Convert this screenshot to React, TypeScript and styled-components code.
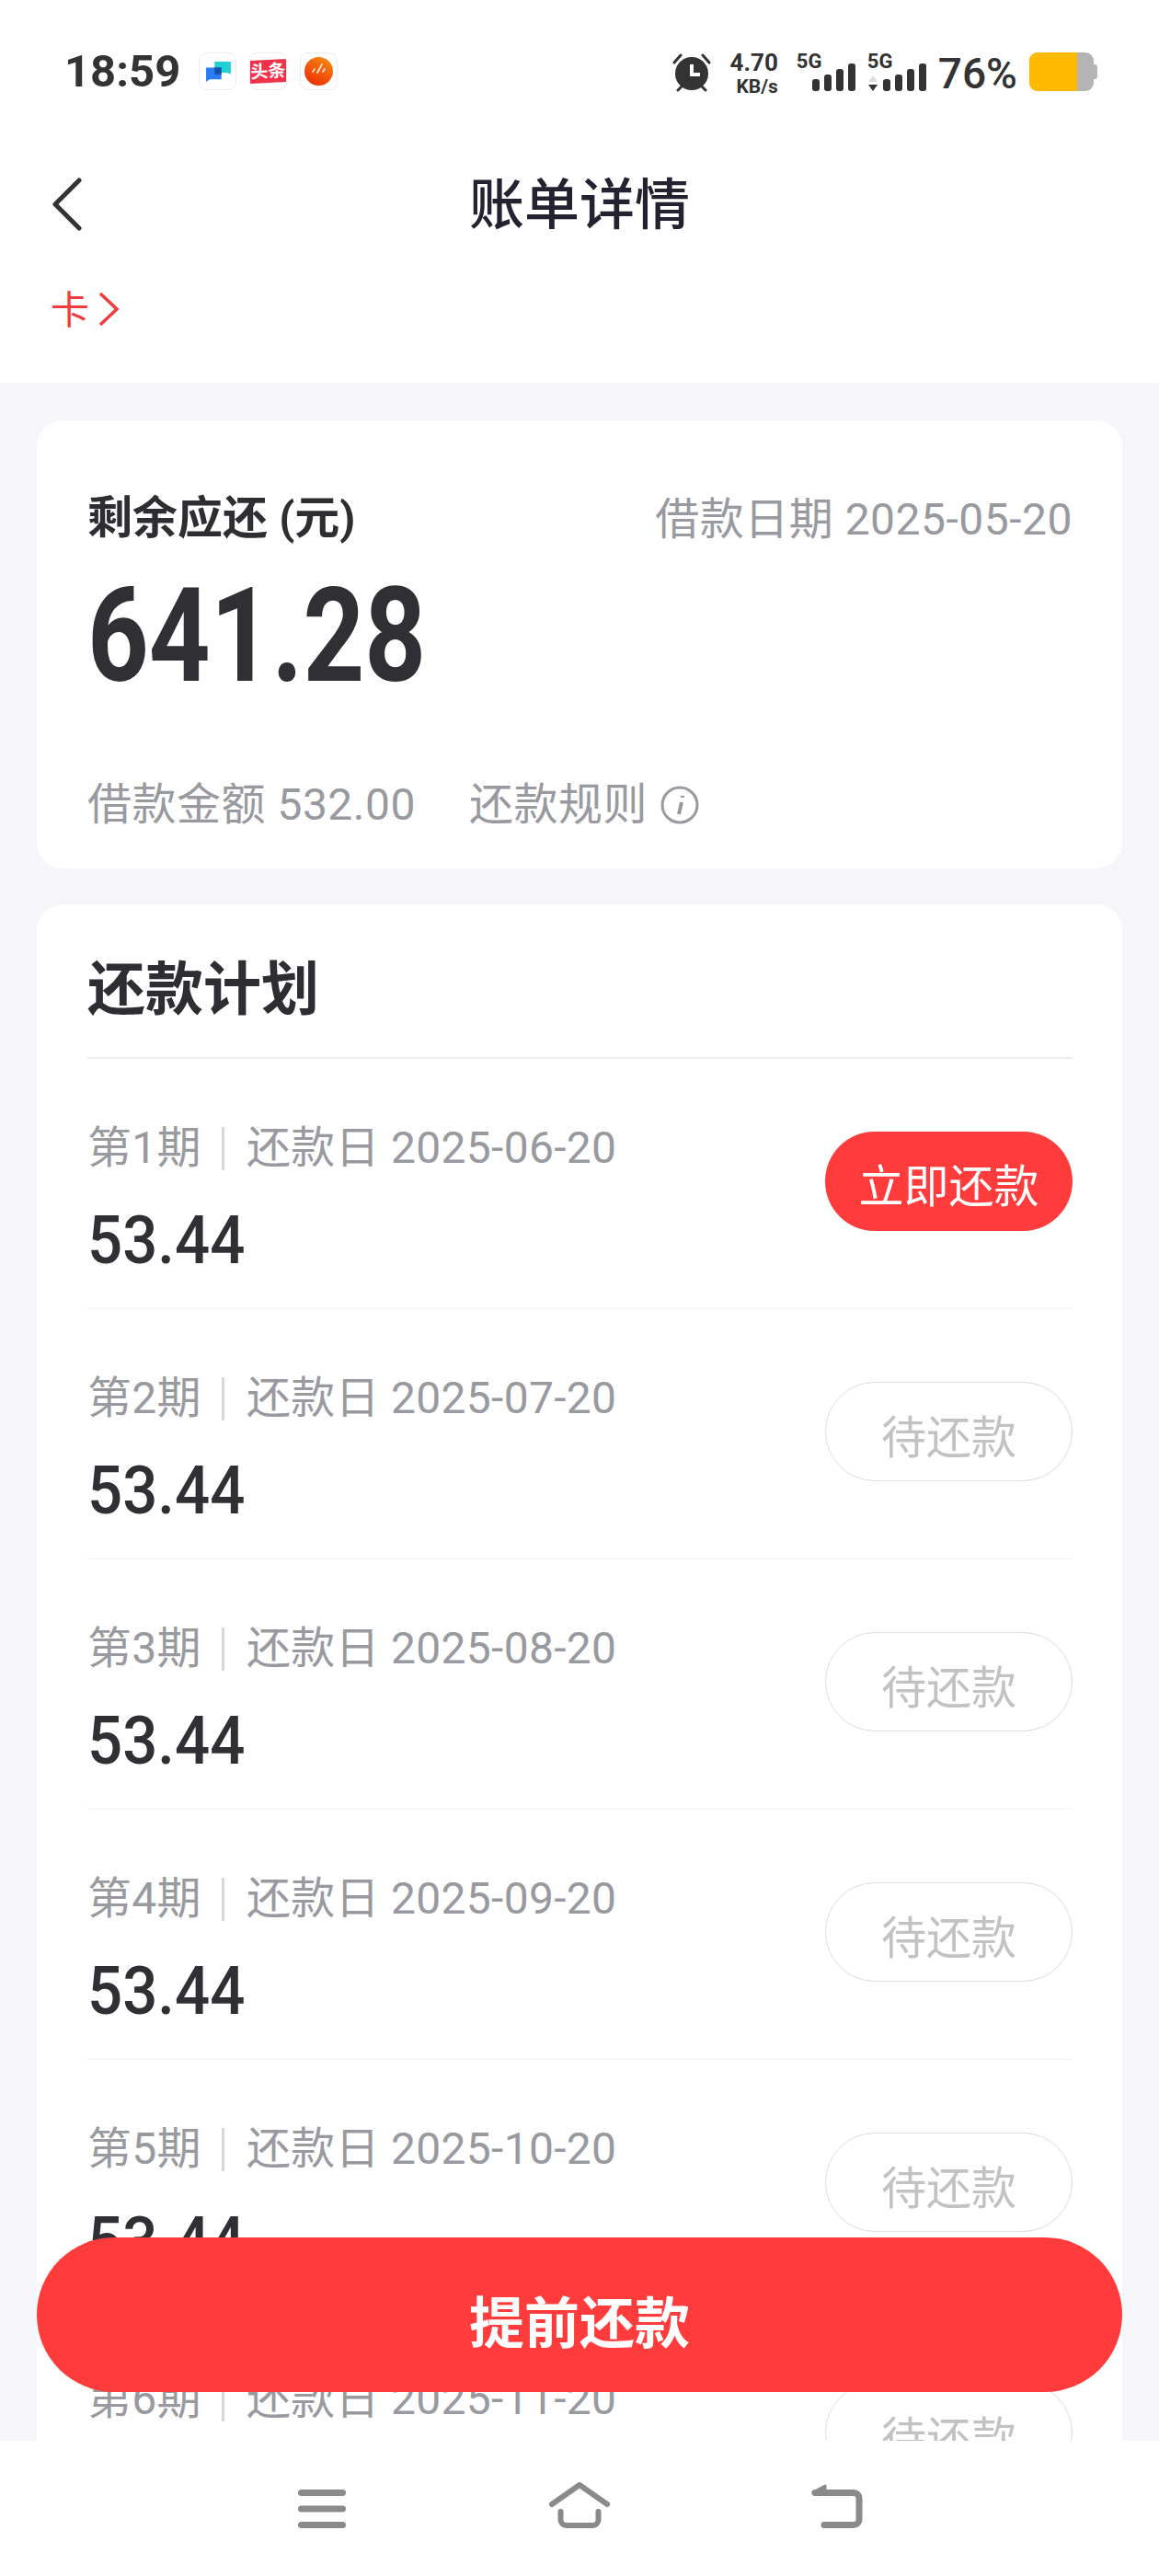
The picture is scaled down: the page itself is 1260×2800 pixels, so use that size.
import styled, { createGlobalStyle } from 'styled-components';

const GlobalStyle = createGlobalStyle`
  html, body {
    margin: 0;
    padding: 0;
    background: #fff;
  }
  body {
    font-family: Roboto, "Noto Sans CJK SC", sans-serif;
  }
`;

const Screen = styled.div`
  position: relative;
  width: 1260px;
  height: 2800px;
  display: flex;
  flex-direction: column;
  overflow: hidden;
  background: #f5f5fa;
`;

const StatusBar = styled.div`
  height: 155px;
  flex: none;
  box-sizing: border-box;
  padding: 57px 71px 0 70px;
  background: #fff;
  display: flex;
  justify-content: space-between;
  align-items: flex-start;
  color: #333;
`;

const StatusGroup = styled.div`
  display: flex;
  align-items: flex-start;
`;

const Clock = styled.div`
  font-size: 49px;
  font-weight: 700;
  line-height: 42px;
  width: 146px;
`;

const NoticeIcons = styled.div`
  display: flex;
  gap: 14px;
`;

const NoticeBox = styled.div`
  width: 41px;
  height: 41px;
  box-sizing: border-box;
  border: 1px solid #ececef;
  border-radius: 9px;
  display: flex;
  align-items: center;
  justify-content: center;
  overflow: hidden;
`;

const ToutiaoTag = styled.span`
  width: 41px;
  height: 25px;
  flex: none;
  background: #f0334a;
  color: #fff;
  font-size: 19px;
  font-weight: 700;
  line-height: 25px;
  text-align: center;
  transform: rotate(-3deg);
`;

const Speed = styled.div`
  width: 60px;
  margin: 0 20px 0 12px;
  text-align: right;
  font-weight: 700;
  color: #333;
`;

const SpeedValue = styled.div`
  font-size: 26px;
  line-height: 22px;
`;

const SpeedUnit = styled.div`
  font-size: 21px;
  line-height: 20px;
  margin-top: 5px;
`;

const SignalWrap = styled.div`
  position: relative;
  width: 64px;
  height: 42px;
  margin-right: 13px;
`;

const SignalLabel = styled.span`
  position: absolute;
  left: 0;
  top: 0;
  font-size: 22px;
  font-weight: 700;
  line-height: 20px;
`;

const SignalBars = styled.svg`
  position: absolute;
  right: 0;
  bottom: 0;
`;

const DataArrows = styled.svg`
  position: absolute;
  left: 0;
  bottom: 0;
`;

const Battery = styled.div`
  position: relative;
  width: 70px;
  height: 42px;
  margin-left: 13px;
  border-radius: 9px;
  background: #b4b4b4;
`;

const BatteryFill = styled.div`
  height: 100%;
  border-radius: 9px 0 0 9px;
  background: #ffb900;
`;

const BatteryNub = styled.div`
  position: absolute;
  right: -4px;
  top: 13px;
  width: 4px;
  height: 16px;
  border-radius: 0 3px 3px 0;
  background: #b4b4b4;
`;

const Percent = styled.div`
  font-size: 46px;
  font-weight: 500;
  line-height: 42px;
  margin-top: 2px;
`;

const NavBar = styled.div`
  height: 125px;
  flex: none;
  background: #fff;
  display: flex;
  align-items: center;
  justify-content: center;
  position: relative;
`;

const BackButton = styled.svg`
  position: absolute;
  left: 56px;
  top: 38px;
`;

const Title = styled.h1`
  margin: 0;
  font-size: 60px;
  font-weight: 500;
  color: #222230;
`;

const CardLink = styled.div`
  height: 136px;
  flex: none;
  box-sizing: border-box;
  padding: 30px 0 0 55px;
  background: #fff;
  display: flex;
  align-items: flex-start;
  gap: 9px;
  color: #f03c3c;
  font-size: 42px;
  line-height: 56px;
`;

const Content = styled.div`
  flex: 1;
  min-height: 0;
  overflow: hidden;
  padding: 41px 40px 0;
  display: flex;
  flex-direction: column;
  gap: 39px;
`;

const Card = styled.section`
  background: #fff;
  border-radius: 28px;
  box-sizing: border-box;
  padding: 0 54px 0 55px;
  flex: none;
`;

const SummaryCard = styled(Card)`
  height: 487px;
  padding-top: 78px;
`;

const SummaryHead = styled.div`
  display: flex;
  justify-content: space-between;
  align-items: center;
  height: 60px;
`;

const SummaryTitle = styled.div`
  font-size: 49px;
  font-weight: 700;
  color: #2d2d32;
  padding-bottom: 14px;
`;

const MutedText = styled.div`
  font-size: 48px;
  color: #999a9f;
  line-height: 60px;
  letter-spacing: 0.5px;
  white-space: nowrap;
`;

const TotalAmount = styled.div`
  font-size: 143px;
  font-weight: 700;
  line-height: 110px;
  color: #2f2f34;
  margin-top: 41px;
  transform: scaleX(0.815);
  transform-origin: left center;
`;

const SummaryFoot = styled.div`
  display: flex;
  align-items: center;
  margin-top: 99px;
`;

const RuleLink = styled(MutedText)`
  display: flex;
  align-items: center;
  gap: 14px;
  margin-left: 58px;
`;

const PlanTitle = styled.h2`
  margin: 0;
  height: 168px;
  box-sizing: border-box;
  padding-top: 54px;
  font-size: 63px;
  line-height: 78px;
  font-weight: 700;
  color: #2d2d32;
  border-bottom: 2px solid #eeeef0;
`;

const PlanRow = styled.div`
  height: 272px;
  box-sizing: border-box;
  padding: 67px 0 42px;
  display: flex;
  justify-content: space-between;
  border-bottom: 1px solid #f2f2f4;
`;

const RowLabel = styled(MutedText)`
  display: flex;
  align-items: center;
  letter-spacing: 0.3px;
`;

const RowSep = styled.span`
  width: 3px;
  height: 47px;
  margin: 0 24px 0 22px;
  background: #d8d8da;
`;

const RowAmount = styled.div`
  font-size: 73px;
  font-weight: 500;
  line-height: 60px;
  color: #2f2f34;
  margin-top: 40px;
  transform: scaleX(0.92);
  transform-origin: left center;
`;

const Pill = styled.div<{ $active?: boolean }>`
  width: 269px;
  height: 108px;
  box-sizing: border-box;
  align-self: center;
  margin-top: -30px;
  border-radius: 54px;
  border: ${(p) => (p.$active ? 'none' : '1.5px solid #dddddf')};
  background: ${(p) => (p.$active ? '#ff3b3b' : '#fff')};
  color: ${(p) => (p.$active ? '#fff' : '#c2c2c4')};
  font-size: 49px;
  line-height: 122px;
  text-align: center;
`;

const PrepayButton = styled.button`
  position: absolute;
  left: 40px;
  top: 2432px;
  width: 1180px;
  height: 168px;
  border: none;
  padding: 8px 0 0;
  border-radius: 84px;
  background: #ff3b3b;
  color: #fff;
  font-family: inherit;
  font-size: 60px;
  font-weight: 700;
`;

const BottomNav = styled.div`
  height: 147px;
  flex: none;
  background: #fff;
  position: relative;
  z-index: 1;
  display: flex;
  justify-content: center;
  align-items: flex-start;
  padding-top: 45px;
  box-sizing: border-box;
`;

const NavSlot = styled.div`
  width: 280px;
  display: flex;
  justify-content: center;
`;

const MenuIcon = styled.svg`
  margin-top: 8px;
`;

const CardChevron = styled.svg`
  margin-top: 6px;
`;

const periods = [
  { no: 1, date: '2025-06-20', active: true },
  { no: 2, date: '2025-07-20' },
  { no: 3, date: '2025-08-20' },
  { no: 4, date: '2025-09-20' },
  { no: 5, date: '2025-10-20' },
  { no: 6, date: '2025-11-20' },
];

function Bars() {
  return (
    <SignalBars width="47" height="30" viewBox="0 0 47 30" fill="#333">
      <rect x="0" y="17" width="8" height="13" rx="3" />
      <rect x="13" y="12" width="8" height="18" rx="3" />
      <rect x="26" y="6" width="8" height="24" rx="3" />
      <rect x="39" y="0" width="8" height="30" rx="3" />
    </SignalBars>
  );
}

function App() {
  return (
    <Screen>
      <GlobalStyle />
      <StatusBar>
        <StatusGroup>
          <Clock>18:59</Clock>
          <NoticeIcons>
            <NoticeBox>
              <svg width="28" height="24" viewBox="0 0 30 26">
                <path d="M11 1h19v15l-4-2H11z" fill="#1fcfd6" />
                <path d="M1 8h18v14H5l-4 3z" fill="#2a7cf0" />
                <rect x="11" y="8" width="8" height="8" fill="#1450a8" />
              </svg>
            </NoticeBox>
            <NoticeBox>
              <ToutiaoTag>头条</ToutiaoTag>
            </NoticeBox>
            <NoticeBox>
              <svg width="31" height="31" viewBox="0 0 31 31">
                <defs>
                  <linearGradient id="orangeDot" x1="0.8" y1="0" x2="0.2" y2="1">
                    <stop offset="0" stopColor="#f58a14" />
                    <stop offset="1" stopColor="#ee2a00" />
                  </linearGradient>
                </defs>
                <circle cx="15.5" cy="15.5" r="15.5" fill="url(#orangeDot)" />
                <path d="M9 16l2-3M14 17l5-9M20 16l2-3" stroke="#ffd9c2" strokeWidth="2" strokeLinecap="round" />
              </svg>
            </NoticeBox>
          </NoticeIcons>
        </StatusGroup>
        <StatusGroup>
          <svg width="44" height="43" viewBox="0 0 44 43">
            <path d="M3 11l7-8M41 11l-7-8M7 41l4-4M37 41l-4-4" stroke="#333" strokeWidth="3" strokeLinecap="round" />
            <circle cx="22" cy="23" r="18" fill="#333" />
            <path d="M22 13v11h9" stroke="#fff" strokeWidth="4" fill="none" />
          </svg>
          <Speed>
            <SpeedValue>4.70</SpeedValue>
            <SpeedUnit>KB/s</SpeedUnit>
          </Speed>
          <SignalWrap>
            <SignalLabel>5G</SignalLabel>
            <Bars />
          </SignalWrap>
          <SignalWrap>
            <SignalLabel>5G</SignalLabel>
            <DataArrows width="12" height="17" viewBox="0 0 12 17">
              <path d="M6 0l5 7H1z" fill="#dcdcdc" />
              <path d="M6 17l5-7H1z" fill="#333" />
            </DataArrows>
            <Bars />
          </SignalWrap>
          <Percent>76%</Percent>
          <Battery>
            <BatteryFill style={{ width: '74%' }} />
            <BatteryNub />
          </Battery>
        </StatusGroup>
      </StatusBar>
      <NavBar>
        <BackButton width="34" height="58" viewBox="0 0 34 58" fill="none">
          <path d="M30 3L4 29l26 26" stroke="#333" strokeWidth="5" strokeLinecap="round" strokeLinejoin="round" />
        </BackButton>
        <Title>账单详情</Title>
      </NavBar>
      <CardLink>
        <span>卡</span>
        <CardChevron width="24" height="40" viewBox="0 0 24 40" fill="none">
          <path d="M3 3l18 17L3 37" stroke="#f03c3c" strokeWidth="3.5" />
        </CardChevron>
      </CardLink>
      <Content>
        <SummaryCard>
          <SummaryHead>
            <SummaryTitle>剩余应还 (元)</SummaryTitle>
            <MutedText>借款日期 2025-05-20</MutedText>
          </SummaryHead>
          <TotalAmount>641.28</TotalAmount>
          <SummaryFoot>
            <MutedText>借款金额 532.00</MutedText>
            <RuleLink>
              还款规则
              <svg width="42" height="42" viewBox="0 0 42 42" fill="none">
                <circle cx="21" cy="21" r="19" stroke="#999a9f" strokeWidth="3" />
                <path d="M23 18l-3 13M24 11v2" stroke="#999a9f" strokeWidth="4" />
              </svg>
            </RuleLink>
          </SummaryFoot>
        </SummaryCard>
        <Card>
          <PlanTitle>还款计划</PlanTitle>
          {periods.map((p) => (
            <PlanRow key={p.no}>
              <div>
                <RowLabel>
                  第{p.no}期
                  <RowSep />
                  还款日 {p.date}
                </RowLabel>
                <RowAmount>53.44</RowAmount>
              </div>
              <Pill $active={p.active}>{p.active ? '立即还款' : '待还款'}</Pill>
            </PlanRow>
          ))}
        </Card>
      </Content>
      <PrepayButton>提前还款</PrepayButton>
      <BottomNav>
        <NavSlot>
          <MenuIcon width="54" height="43" viewBox="0 0 54 43" fill="#8a8a8a">
            <rect x="1" y="0" width="52" height="7" rx="3.5" />
            <rect x="1" y="17.5" width="52" height="7" rx="3.5" />
            <rect x="1" y="35" width="52" height="7" rx="3.5" />
          </MenuIcon>
        </NavSlot>
        <NavSlot>
          <svg width="68" height="52" viewBox="0 0 68 52" fill="none" stroke="#8a8a8a" strokeWidth="6" strokeLinecap="round" strokeLinejoin="round">
            <path d="M4 24L34 3l30 21" />
            <path d="M13.5 32v9a6 6 0 0 0 6 6h29a6 6 0 0 0 6-6v-9" />
          </svg>
        </NavSlot>
        <NavSlot>
          <svg width="60" height="52" viewBox="0 0 60 52" fill="none" stroke="#8a8a8a" strokeWidth="7" strokeLinecap="round">
            <path d="M6 11.5h42a6 6 0 0 1 6 6v23a6 6 0 0 1-6 6H16" />
            <path d="M4 11l13-7v7z" fill="#8a8a8a" strokeWidth="3" strokeLinejoin="round" />
          </svg>
        </NavSlot>
      </BottomNav>
    </Screen>
  );
}

export default App;
